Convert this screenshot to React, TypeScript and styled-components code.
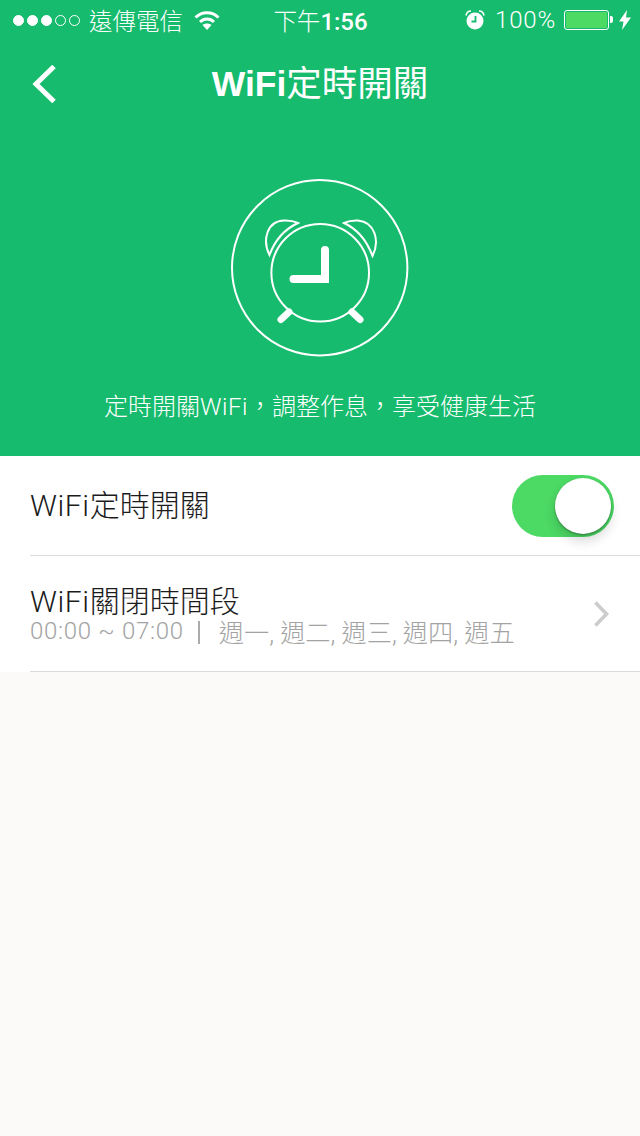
import React from 'react'
import styled, { createGlobalStyle } from 'styled-components'

const GlobalStyle = createGlobalStyle`
  html, body {
    margin: 0;
    padding: 0;
    background: #fbfaf8;
    font-family: Roboto, "Noto Sans CJK TC", sans-serif;
  }
`

const Page = styled.div`
  width: 640px;
  height: 1136px;
  overflow: hidden;
  background: #fbfaf8;
`

const Hero = styled.header`
  background: #16bb6d;
  height: 456px;
  color: #fff;
  display: flex;
  flex-direction: column;
`

const StatusBar = styled.div`
  height: 40px;
  display: grid;
  grid-template-columns: 1fr auto 1fr;
  align-items: center;
  padding: 0 9px 0 13px;
`

const StatusLeft = styled.div`
  display: flex;
  align-items: center;
`

const StatusRight = styled.div`
  display: flex;
  align-items: center;
  justify-content: flex-end;
`

const Dots = styled.div`
  display: flex;
  gap: 3px;
  margin-right: 9px;
`

const Dot = styled.span<{ $on?: boolean }>`
  width: 11px;
  height: 11px;
  box-sizing: border-box;
  border-radius: 50%;
  border: 1px solid #fff;
  background: ${p => (p.$on ? '#fff' : 'transparent')};
`

const Carrier = styled.span`
  font-size: 23.5px;
  font-weight: 300;
  margin-right: 11px;
`

const Clock = styled.span`
  font-size: 23.5px;
  font-weight: 300;
  display: flex;
  align-items: baseline;
  margin-right: 3px;
`

const ClockDigits = styled.span`
  font-size: 24px;
  font-weight: 500;
`

const Percent = styled.span`
  font-size: 24px;
  font-weight: 300;
  margin: 0 8px 0 10px;
  letter-spacing: 0.8px;
`

const Battery = styled.div`
  position: relative;
  width: 45px;
  height: 20px;
  box-sizing: border-box;
  border: 1px solid #fff;
  border-radius: 3px;
  padding: 1px;
  margin-right: 10px;

  &::after {
    content: '';
    position: absolute;
    right: -5px;
    top: 5px;
    width: 3px;
    height: 7px;
    background: #fff;
    border-radius: 0 2px 2px 0;
  }
`

const BatteryFill = styled.div`
  height: 100%;
  background: #4cd964;
  border-radius: 1px;
`

const NavBar = styled.nav`
  height: 90px;
  display: grid;
  grid-template-columns: 1fr auto 1fr;
  align-items: center;
`

const BackIcon = styled.svg`
  display: block;
  margin-left: 30px;
`

const Title = styled.h1`
  margin: 0;
  font-size: 35.5px;
  font-weight: 400;
  line-height: 1;
  white-space: nowrap;
`

const TitleLatin = styled.b`
  font-family: "Liberation Sans", sans-serif;
  font-weight: 700;
`

const HeroBody = styled.div`
  display: flex;
  flex-direction: column;
  align-items: center;
  padding-top: 48px;
`

const HeroCaption = styled.p`
  margin: 33px 0 0;
  font-size: 24px;
  line-height: 32px;
  font-weight: 300;
  white-space: nowrap;
`

const Latin = styled.span`
  letter-spacing: 0.6px;
`

const List = styled.section`
  background: #fff;
`

const Row = styled.div<{ $height: number }>`
  height: ${p => p.$height}px;
  margin-left: 30px;
  box-sizing: border-box;
  border-bottom: 1px solid #dcdcdc;
  display: flex;
  align-items: center;
  justify-content: space-between;
`

const RowTitle = styled.div`
  font-size: 30px;
  line-height: 36px;
  font-weight: 300;
  color: #1c1c1c;
  white-space: nowrap;
`

const RowText = styled.div`
  display: flex;
  flex-direction: column;
  margin-top: 1px;
`

const RowSub = styled.div`
  display: flex;
  align-items: center;
  height: 26px;
  margin-top: -2px;
  font-weight: 300;
  color: #a3a3a3;
  white-space: pre;
`

const SubTime = styled.span`
  font-size: 24px;
  letter-spacing: 0.7px;
`

const SubDivider = styled.i`
  display: block;
  width: 2px;
  height: 23px;
  margin: 2px 19px 0 14px;
  background: #ababab;
`

const SubDays = styled.span`
  font-size: 25.2px;
`

const Toggle = styled.div`
  width: 102px;
  height: 62px;
  box-sizing: border-box;
  padding: 3px;
  margin-right: 26px;
  border-radius: 31px;
  background: #4cd964;
  display: flex;
  justify-content: flex-end;
`

const Knob = styled.div`
  width: 56px;
  height: 56px;
  border-radius: 50%;
  background: #fff;
  box-shadow: 0 1px 2px rgba(0, 0, 0, 0.35), 0 7px 12px rgba(0, 0, 0, 0.16);
`

const Chevron = styled.svg`
  display: block;
  margin-right: 29px;
`

export default function App() {
  return (
    <Page>
      <GlobalStyle />
      <Hero>
        <StatusBar>
          <StatusLeft>
            <Dots>
              <Dot $on />
              <Dot $on />
              <Dot $on />
              <Dot />
              <Dot />
            </Dots>
            <Carrier>遠傳電信</Carrier>
            <svg width="26" height="20" viewBox="0 0 26 20" fill="none" stroke="#fff" strokeWidth="3">
              <path d="M1.5 7.5C8 1 18 1 24.5 7.5" />
              <path d="M6 12c4-4 10-4 14 0" />
              <path d="M13 20l-4.5-5c2.5-2 6.5-2 9 0z" fill="#fff" stroke="none" />
            </svg>
          </StatusLeft>
          <Clock>
            下午<ClockDigits>1:56</ClockDigits>
          </Clock>
          <StatusRight>
            <svg width="20" height="20" viewBox="0 0 20 20">
              <circle cx="10" cy="11" r="8.5" fill="#fff" />
              <path d="M1 5.5C1.5 2.5 3.5 1 6 1M19 5.5C18.5 2.500 16.5 1 14 1" fill="none" stroke="#fff" strokeWidth="1.6" />
              <path d="M10.5 6v5.500H6.500" fill="none" stroke="#16bb6d" strokeWidth="1.8" />
            </svg>
            <Percent>100%</Percent>
            <Battery>
              <BatteryFill />
            </Battery>
            <svg width="12" height="20" viewBox="0 0 12 20">
              <path d="M8 0L0 11.5h4.500L3 20l9-12.500H7z" fill="#fff" />
            </svg>
          </StatusRight>
        </StatusBar>
        <NavBar>
          <BackIcon width="26" height="40" viewBox="0 0 26 40" fill="none" stroke="#fff" strokeWidth="5">
            <path d="M24 1.500L6 19 24 36.500" />
          </BackIcon>
          <Title>
            <TitleLatin>WiFi</TitleLatin>定時開關
          </Title>
        </NavBar>
        <HeroBody>
          <svg width="180" height="180" viewBox="230 178 180 180" fill="none" stroke="#fff">
            <circle cx="319.7" cy="267.7" r="87.7" strokeWidth="2" />
            <circle cx="320.2" cy="272.7" r="48.8" strokeWidth="2" />
            <path d="M269.5 255C262 240 267 221 284 220.5c5-.2 10 .6 14 2.5-13 6-23 17-28.500 32z" strokeWidth="2" />
            <path d="M372.5 256C380 241 375 222 358 220.5c-5-.2-10 .6-14 2.500 13 6 23 18 28.500 33z" strokeWidth="2" />
            <path d="M293.5 279H325V250" strokeWidth="8" strokeLinecap="round" />
            <path d="M289 312l-8 7.500M352 312l8 7.500" strokeWidth="7" strokeLinecap="round" />
          </svg>
          <HeroCaption>
            定時開關<Latin>WiFi</Latin>，調整作息，享受健康生活
          </HeroCaption>
        </HeroBody>
      </Hero>
      <List>
        <Row $height={100}>
          <RowTitle>
            <Latin>WiFi</Latin>定時開關
          </RowTitle>
          <Toggle>
            <Knob />
          </Toggle>
        </Row>
        <Row $height={116}>
          <RowText>
            <RowTitle>
              <Latin>WiFi</Latin>關閉時間段
            </RowTitle>
            <RowSub>
              <SubTime>00:00 ~ 07:00</SubTime>
              <SubDivider />
              <SubDays>週一, 週二, 週三, 週四, 週五</SubDays>
            </RowSub>
          </RowText>
          <Chevron width="18" height="28" viewBox="0 0 18 28" fill="none" stroke="#cccccc" strokeWidth="3.600">
            <path d="M2.400 2.500L13.500 14 2.400 25.500" />
          </Chevron>
        </Row>
      </List>
    </Page>
  )
}
